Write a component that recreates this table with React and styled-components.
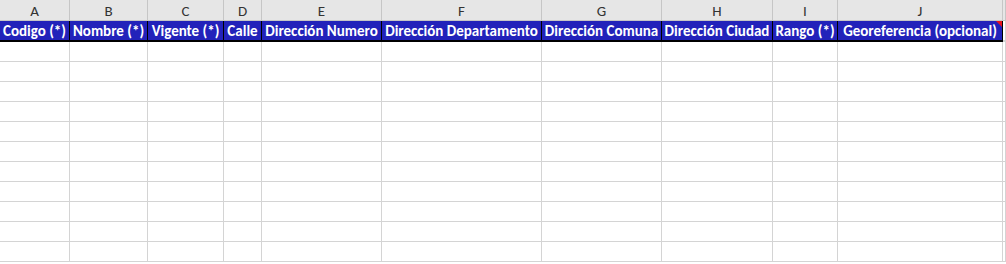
import React from "react";
import styled, { createGlobalStyle } from "styled-components";

const Global = createGlobalStyle`
  html, body { margin: 0; padding: 0; background: #ffffff; overflow: hidden; }
  #root { width: 1006px; height: 264px; overflow: hidden; }
`;

const columns = [
  { letter: "A", width: 70, title: "Codigo (*)" },
  { letter: "B", width: 78, title: "Nombre (*)" },
  { letter: "C", width: 76, title: "Vigente (*)" },
  { letter: "D", width: 38, title: "Calle" },
  { letter: "E", width: 120, title: "Dirección Numero" },
  { letter: "F", width: 160, title: "Dirección Departamento" },
  { letter: "G", width: 120, title: "Dirección Comuna" },
  { letter: "H", width: 111, title: "Dirección Ciudad" },
  { letter: "I", width: 65, title: "Rango (*)" },
  { letter: "J", width: 165, title: "Georeferencia (opcional)", note: true },
];

const template = columns.map((c) => `${c.width}px`).join(" ") + " 1fr";

const Sheet = styled.div`
  display: grid;
  grid-template-columns: ${template};
  width: 1006px;
  font-family: Carlito, Lato, "Open Sans", sans-serif;
`;

const LetterCell = styled.div`
  height: 20px;
  background: #e6e6e6;
  border-right: 1px solid #c6c6c6;
  border-bottom: 1px solid #c6c6c6;
  color: #333333;
  font-size: 15px;
  line-height: 22px;
  text-align: center;
  box-sizing: content-box;
`;

const HeaderCell = styled.div`
  position: relative;
  height: 19px;
  background: ${(p) => (p.$blank ? "#ffffff" : "#2222ba")};
  border-right: 1px solid ${(p) => (p.$blank ? "#d4d4d4" : "#000000")};
  border-bottom: 2px solid ${(p) => (p.$blank ? "#d4d4d4" : "#000000")};
  color: #ffffff;
  font-weight: 700;
  font-size: 15px;
  line-height: 21px;
  white-space: nowrap;
  overflow: hidden;
  display: flex;
  justify-content: center;
`;

const NoteMark = styled.span`
  position: absolute;
  top: 0;
  right: 0;
  width: 0;
  height: 0;
  border-top: 6px solid #e8141c;
  border-left: 6px solid transparent;
`;

const BodyCell = styled.div`
  height: 19px;
  border-right: 1px solid #d4d4d4;
  border-bottom: 1px solid #d4d4d4;
`;

const ROWS = 11;

export default function App() {
  return (
    <>
      <Global />
      <Sheet>
        {columns.map((c) => (
          <LetterCell key={c.letter}>{c.letter}</LetterCell>
        ))}
        <LetterCell />
        {columns.map((c) => (
          <HeaderCell key={c.letter}>
            {c.title}
            {c.note && <NoteMark />}
          </HeaderCell>
        ))}
        <HeaderCell $blank />
        {Array.from({ length: ROWS }).map((_, r) =>
          [...columns, { letter: "K" }].map((c) => (
            <BodyCell key={`${r}-${c.letter}`} />
          ))
        )}
      </Sheet>
    </>
  );
}
